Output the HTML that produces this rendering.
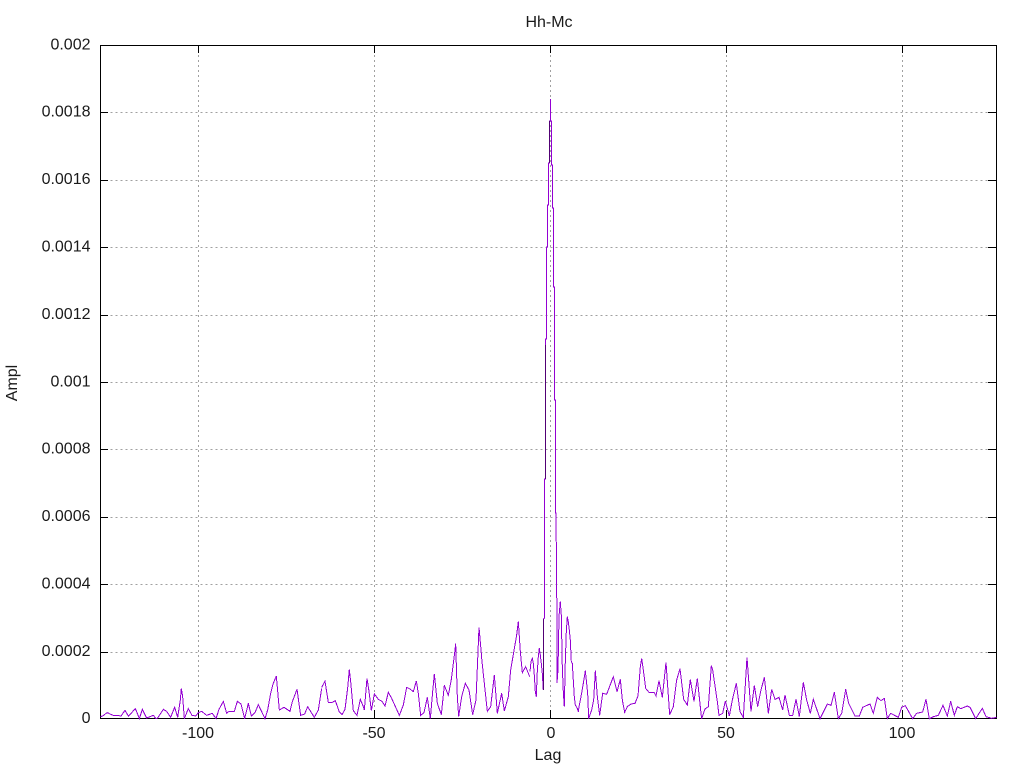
<!DOCTYPE html>
<html>
<head>
<meta charset="utf-8">
<style>
html,body{margin:0;padding:0;background:#fff;width:1024px;height:768px;overflow:hidden}
svg{display:block}
text{font-family:"Liberation Sans",sans-serif;font-size:16px;fill:#1a1a1a}
.g{stroke:#a0a0a0;stroke-width:1;stroke-dasharray:2 3;fill:none}
.k{stroke:#000;stroke-width:1;fill:none}
.t{stroke:#9400d3;fill:none}
</style>
</head>
<body>
<svg width="1024" height="768" viewBox="0 0 1024 768" xmlns="http://www.w3.org/2000/svg">
<rect width="1024" height="768" fill="#fff"/>
<g shape-rendering="crispEdges">
<path class="g" d="M100.5 112.5H996.5M100.5 180.5H996.5M100.5 247.5H996.5M100.5 315.5H996.5M100.5 382.5H996.5M100.5 449.5H996.5M100.5 517.5H996.5M100.5 584.5H996.5M100.5 652.5H996.5"/>
<path class="g" d="M198.5 45V718M374.5 45V718M550.5 45V718M726.5 45V718M902.5 45V718"/>
<path class="k" d="M100.5 45.5H996.5V718.5H100.5Z"/>
<path class="k" d="M100 112.5h8M100 180.5h8M100 247.5h8M100 315.5h8M100 382.5h8M100 449.5h8M100 517.5h8M100 584.5h8M100 652.5h8M996 112.5h-8M996 180.5h-8M996 247.5h-8M996 315.5h-8M996 382.5h-8M996 449.5h-8M996 517.5h-8M996 584.5h-8M996 652.5h-8"/>
<path class="k" d="M198.5 718v-8M374.5 718v-8M550.5 718v-8M726.5 718v-8M902.5 718v-8M198.5 45v8M374.5 45v8M550.5 45v8M726.5 45v8M902.5 45v8"/>
<g stroke-width="3" class="t" transform="translate(95 610) scale(.33333)">
<polyline points="17,320 25,317 33,310 38,308 47,313 55,316 65,316 78,318 90,301 100,318 110,308 121,296 127,310 133,326 142,298 155,324 165,320 175,316 183,326 188,324 205,298 215,304 227,322 239,292 248,322 256,270 259,235 263,260 268,326 280,296 291,316 302,318 310,308 320,304 335,316 352,310 363,326 372,298 385,274 395,310 402,304 418,304 427,274 438,282 449,326 460,280 469,318 480,308 490,284 510,326 518,300 527,250 534,222 544,198 553,300 567,292 585,304 592,275 606,238 617,316 629,312 638,290 658,322 670,300 680,235"/>
</g>
<g stroke-width="3" class="t" transform="translate(320 610) scale(.33333)">
<polyline points="5,232 15,214 25,277 37,277 46,272 58,306 66,314 75,298 83,234 88,178 93,225 100,302 111,316 121,268 130,290 133,300 141,205 147,244 154,302 163,252 175,268 186,274 195,288 205,247 215,265 238,316 250,285 260,232 270,237 280,245 289,213 295,250 302,316 312,308 322,262 331,326 338,245 343,192 352,280 364,314 373,226 385,256 394,208 405,120 407,100 412,260 416,320 425,260 436,220 447,240 458,314 468,270 477,52 480,85 486,155 502,304 512,290 523,195 532,310 545,250 553,303 565,260 572,180 590,75 595,35 601,125 607,188 617,170 629,200"/>
</g>
<polyline class="t" stroke-width="1" points="530,671.7 531,661.7 532.3,658.3 533.3,663.3 534.3,675 535.3,691.7 536.3,696.7 537.3,671.7 538.3,656.7 539.3,648.3 540.3,655 541.3,663.3 542.3,673.3 543.3,690 543.3,619 544.3,618 544.3,479 545.3,479 545.3,339 546.3,339 546.3,247 547.3,247 547.3,205 548.3,205 548.3,163 549.3,163 549.3,121 550.3,121 550.3,99 550.3,121 551.3,121 551.3,165 552.3,165 552.3,208 553.3,208 553.3,287 554.3,287 554.3,400 555.3,400 555.3,513 556,513 557,626 557,683 558,670 559,616.7 560.3,601.7 561.3,615 562.3,666.7 563.3,691.7 564.3,706.7 565.3,661.7 566.3,631.7 567.3,616.7 568.3,621.7 569.3,630 570.3,640 571.3,661.7 572.3,663.3 573.3,680 574.3,696.7 575.3,705 577.3,708.3 578.3,711.7 579.3,705"/>
<g stroke-width="3" class="t" transform="translate(545 610) scale(.33333)">
<polyline points="103,285 108,260 115,220 121,182 128,250 131,326 140,300 146,270 151,182 157,260 164,316 173,250 185,253 205,200 216,245 226,208 232,270 239,307 247,290 258,282 270,280 279,258 286,170 290,145 295,180 302,235 312,247 328,248 333,258 342,212 352,262 363,157 374,314 385,290 395,210 405,176 416,268 427,285 436,208 447,274 457,205 468,310 470,326 480,297 490,290 499,167 503,180 517,275 522,316 533,310 541,273 553,318 562,270 574,220 585,305 595,322 606,142 618,305 628,226 638,290 648,240 658,202 670,310 680,238"/>
</g>
<g stroke-width="3" class="t" transform="translate(770 610) scale(.33333)">
<polyline points="5,238 15,268 27,262 38,300 45,255 58,316 68,316 78,268 88,320 100,217 110,270 121,310 130,268 150,326 172,282 183,286 193,247 205,326 215,310 227,238 236,280 255,318 268,318 278,292 300,282 310,310 322,262 333,272 343,265 352,326 362,310 385,322 395,292 406,287 428,326 440,310 458,306 468,268 478,326 490,320 505,316 519,286 532,318 542,274 553,316 562,290 572,296 592,288 600,292 617,326 637,295 648,320 665,325 680,322"/>
</g>
<path class="k" stroke-opacity=".45" d="M549.3 121V163M545.3 345V479M543.3 619V690"/>
</g>
<g text-anchor="end">
<text x="90.5" y="49.5">0.002</text>
<text x="90.5" y="116.7">0.0018</text>
<text x="90.5" y="184">0.0016</text>
<text x="90.5" y="251.5">0.0014</text>
<text x="90.5" y="319">0.0012</text>
<text x="90.5" y="386.5">0.001</text>
<text x="90.5" y="453.5">0.0008</text>
<text x="90.5" y="521">0.0006</text>
<text x="90.5" y="588.5">0.0004</text>
<text x="90.5" y="656">0.0002</text>
<text x="90.5" y="723">0</text>
</g>
<g text-anchor="middle">
<text x="198" y="738">-100</text>
<text x="374" y="738">-50</text>
<text x="551" y="738">0</text>
<text x="726" y="738">50</text>
<text x="902" y="738">100</text>
<text x="548" y="760">Lag</text>
<text x="549" y="27">Hh-Mc</text>
<text transform="translate(17 383) rotate(-90)">Ampl</text>
</g>
</svg>
</body>
</html>
